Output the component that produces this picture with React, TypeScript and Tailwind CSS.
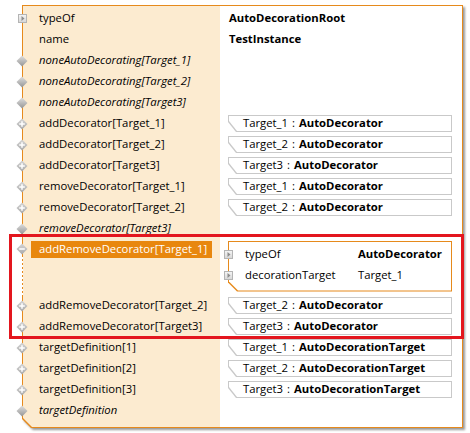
import React from "react"

type Icon = "arrow" | "none" | "plus" | "minus" | "blank"

interface Row {
  icon: Icon
  label: string
  italic?: boolean
  value?: string
  box?: [string, string]
}

const CHAMFER_BOX = "[clip-path:polygon(0_0,100%_0,100%_100%,8px_100%,0_calc(100%-10px))]"
const CHAMFER_FRAME = "[clip-path:polygon(0_0,100%_0,100%_100%,9px_100%,0_calc(100%-9px))]"

function RowIcon({ icon }: { icon: Icon }) {
  if (icon === "blank") return <span className="w-[11px]" />
  if (icon === "arrow") {
    return (
      <svg width="11" height="11" viewBox="0 0 11 11" className="shrink-0">
        <defs>
          <linearGradient id="ag" x1="0" y1="0" x2="0" y2="1">
            <stop offset="0" stopColor="#f6f6f6" />
            <stop offset="1" stopColor="#d6d6d6" />
          </linearGradient>
        </defs>
        <rect x="1.5" y="1.5" width="8" height="8" fill="url(#ag)" stroke="#b4b4b4" />
        <polygon points="4.5,3 7.5,5.5 4.5,8" fill="#8c8c8c" />
      </svg>
    )
  }
  const dark = icon === "none"
  return (
    <svg width="12" height="12" viewBox="0 0 12 12" className="shrink-0">
      <defs>
        <linearGradient id="dg" x1="0" y1="0" x2="0" y2="1">
          <stop offset="0" stopColor="#e0e0e0" />
          <stop offset="1" stopColor="#959595" />
        </linearGradient>
        <linearGradient id="pg" x1="0" y1="0" x2="0" y2="1">
          <stop offset="0" stopColor="#d6d6d6" />
          <stop offset="1" stopColor="#a9a9a9" />
        </linearGradient>
      </defs>
      <polygon points="6,0.5 11.5,6 6,11.5 0.5,6" fill={dark ? "url(#dg)" : "url(#pg)"} />
      {(icon === "plus" || icon === "minus") && (
        <line x1="3.2" y1="6" x2="8.8" y2="6" stroke="#fff" strokeWidth="1.5" />
      )}
      {icon === "plus" && <line x1="6" y1="3.2" x2="6" y2="8.8" stroke="#fff" strokeWidth="1.5" />}
    </svg>
  )
}

function ValueBox({ name, type }: { name: string; type: string }) {
  return (
    <div className={`ml-[16px] w-[224px] h-[17px] bg-[#c9c9c9] p-px ${CHAMFER_BOX}`}>
      <div className={`h-full bg-white flex items-center pl-[14px] whitespace-nowrap ${CHAMFER_BOX}`}>
        <span>{name}</span>
        <span className="mx-[4px]">:</span>
        <span className="font-bold">{type}</span>
      </div>
    </div>
  )
}

function PropertyRow({ row }: { row: Row }) {
  return (
    <div className="h-[21px] flex items-center">
      <div className="-ml-[6px] w-[12px] flex justify-center">
        <RowIcon icon={row.icon} />
      </div>
      <div className={`ml-[3px] w-[181px] pl-[8px] whitespace-nowrap ${row.italic ? "italic" : ""}`}>
        {row.label}
      </div>
      {row.value && <div className="ml-[8px] pl-[9px] font-bold">{row.value}</div>}
      {row.box && <ValueBox name={row.box[0]} type={row.box[1]} />}
    </div>
  )
}

function ExpandedRow() {
  return (
    <div className="relative h-[56px] flex items-start pt-[1.5px]">
      <div className="absolute left-0 top-[16px] bottom-0 w-px bg-[repeating-linear-gradient(to_bottom,#e68a1c_0_2px,#ffffff_2px_4px)]" />
      <div className="h-[17px] -ml-[6px] w-[12px] flex items-center justify-center">
        <RowIcon icon="minus" />
      </div>
      <div className="ml-[3px] w-[181px] h-[17px] pl-[8px] flex items-center bg-[#e8870e] text-white whitespace-nowrap">
        addRemoveDecorator[Target_1]
      </div>
      <div className="relative ml-[16px] w-[224px] h-[51px]">
        <div className={`absolute inset-0 bg-[#e68a1c] ${CHAMFER_FRAME}`}>
          <div className={`absolute inset-px bg-white ${CHAMFER_FRAME}`} />
        </div>
        <div className="relative flex flex-col pt-[3.5px]">
          {[
            ["typeOf", "AutoDecorator", true],
            ["decorationTarget", "Target_1", false],
          ].map(([k, v, bold]) => (
            <div key={k as string} className="h-[21px] flex items-center">
              <div className="-ml-[5px] w-[11px] flex justify-center">
                <RowIcon icon="arrow" />
              </div>
              <div className="ml-[11px] w-[113px]">{k}</div>
              <div className={bold ? "font-bold" : ""}>{v}</div>
            </div>
          ))}
        </div>
      </div>
    </div>
  )
}

const before: Row[] = [
  { icon: "arrow", label: "typeOf", value: "AutoDecorationRoot" },
  { icon: "blank", label: "name", value: "TestInstance" },
  { icon: "none", label: "noneAutoDecorating[Target_1]", italic: true },
  { icon: "none", label: "noneAutoDecorating[Target_2]", italic: true },
  { icon: "none", label: "noneAutoDecorating[Target3]", italic: true },
  { icon: "plus", label: "addDecorator[Target_1]", box: ["Target_1", "AutoDecorator"] },
  { icon: "plus", label: "addDecorator[Target_2]", box: ["Target_2", "AutoDecorator"] },
  { icon: "plus", label: "addDecorator[Target3]", box: ["Target3", "AutoDecorator"] },
  { icon: "plus", label: "removeDecorator[Target_1]", box: ["Target_1", "AutoDecorator"] },
  { icon: "plus", label: "removeDecorator[Target_2]", box: ["Target_2", "AutoDecorator"] },
  { icon: "none", label: "removeDecorator[Target3]", italic: true },
]

const after: Row[] = [
  { icon: "plus", label: "addRemoveDecorator[Target_2]", box: ["Target_2", "AutoDecorator"] },
  { icon: "plus", label: "addRemoveDecorator[Target3]", box: ["Target3", "AutoDecorator"] },
  { icon: "plus", label: "targetDefinition[1]", box: ["Target_1", "AutoDecorationTarget"] },
  { icon: "plus", label: "targetDefinition[2]", box: ["Target_2", "AutoDecorationTarget"] },
  { icon: "plus", label: "targetDefinition[3]", box: ["Target3", "AutoDecorationTarget"] },
  { icon: "none", label: "targetDefinition", italic: true },
]

export default function App() {
  return (
    <div className="relative w-[470px] h-[433px] bg-white pt-[5px] pl-[22px] text-[11.3px] text-black font-['Open_Sans',sans-serif]">
      <div className="relative w-[441px] h-[423px]">
        <div className="absolute inset-0 [filter:drop-shadow(2px_2px_1px_rgba(0,0,0,0.4))]">
          <div className={`absolute inset-0 bg-[#e68a1c] ${CHAMFER_FRAME}`}>
            <div
              className={`absolute inset-px bg-[linear-gradient(to_right,#fcebd0_197px,#ffffff_197px)] ${CHAMFER_FRAME}`}
            />
          </div>
        </div>
        <div className="relative flex flex-col pt-[3px]">
          {before.map((r, i) => (
            <PropertyRow key={"b" + i} row={r} />
          ))}
          <ExpandedRow />
          {after.map((r, i) => (
            <PropertyRow key={"a" + i} row={r} />
          ))}
        </div>
      </div>
      <div className="absolute left-[9px] top-[234px] w-[455px] h-[105px] border-[3px] border-[#e3161e]" />
    </div>
  )
}
